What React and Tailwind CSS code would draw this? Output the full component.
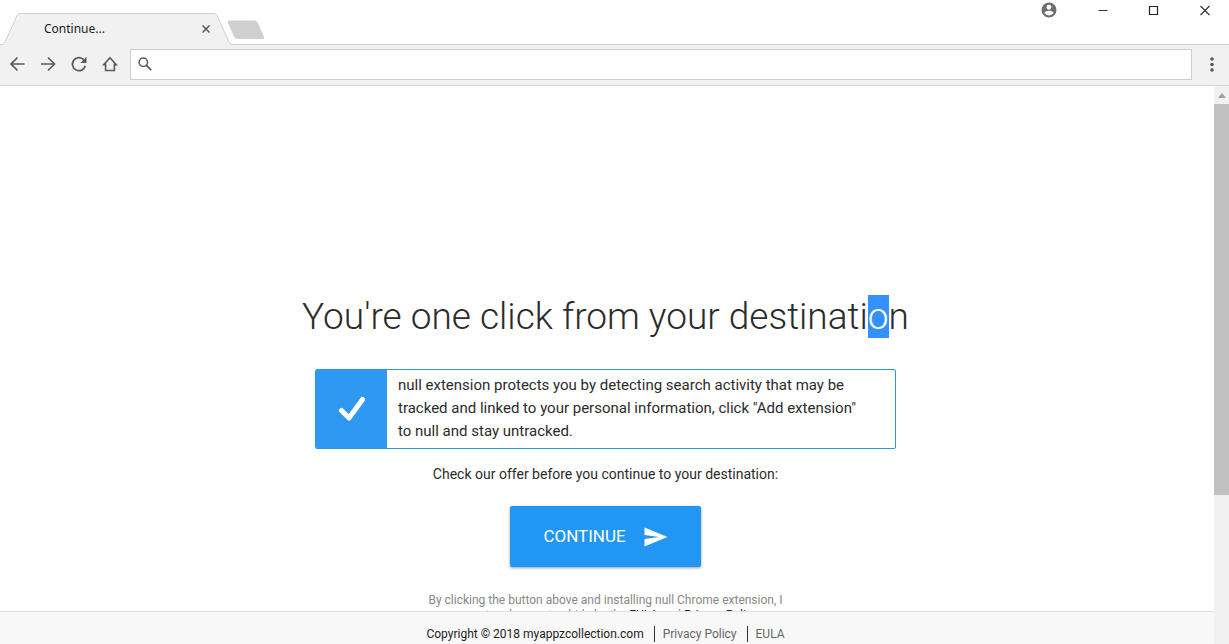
import { clsx } from 'clsx';

const iconButton = 'flex h-6 w-6 shrink-0 items-center justify-center text-[#5a5a5a]';

function TabStrip() {
  return (
    <div className="flex h-[45px] items-end justify-between border-b border-[#d0d0d0] bg-white">
      <div className="flex items-end">
        <div className="relative -mb-px h-8 w-[234px]">
          <svg className="absolute inset-0" width="234" height="32" viewBox="0 0 234 32" fill="none">
            <path d="M0 32 L4 31 L17 2.5 Q18 .5 20 .5 H214 Q216 .5 217 2.5 L230 31 L234 32 Z" fill="#f1f1f1" />
            <path d="M0 31.5 H2 Q4 31 5 29 L17 2.5 Q18 .5 20 .5 H214 Q216 .5 217 2.5 L229 29 Q230 31 232 31.5 H234" stroke="#d0d0d0" />
          </svg>
          <div className="relative flex h-8 items-center justify-between pl-11 pr-5">
            <span className="font-['Noto_Sans',sans-serif] text-xs leading-5 text-[#222]">Continue...</span>
            <button type="button" aria-label="Close tab" className="flex h-4 w-4 items-center justify-center">
              <svg width="8" height="8" viewBox="0 0 8 8" stroke="#5a5a5a" strokeWidth="1.5">
                <path d="M.5 .5 L7.5 7.5 M7.5 .5 L.5 7.5" />
              </svg>
            </button>
          </div>
        </div>
        <button type="button" aria-label="New tab" className="mb-1 -ml-2">
          <svg width="39" height="20" viewBox="0 0 39 20">
            <path d="M4 .5 H28 Q31 .5 32 3 L38 17 Q39 19 37 19 H12 Q9 19 8 16.5 L2 3 Q1 .5 4 .5 Z" fill="#cfcfcf" />
          </svg>
        </button>
      </div>

      {/* Window controls */}
      <div className="flex h-5 items-center gap-[35px] self-start pr-4">
        <button type="button" aria-label="Account" className="pr-0.5">
          <svg width="18" height="18" viewBox="0 0 24 24" fill="#6e6e6e">
            <path d="M12 2a10 10 0 1 0 0 20 10 10 0 0 0 0-20zm0 3a3.3 3.3 0 1 1 0 6.6A3.3 3.3 0 0 1 12 5zm0 14.2a7.2 7.2 0 0 1-6-3.22c.03-1.990 4-3.080 6-3.080s5.970 1.090 6 3.080a7.200 7.200 0 0 1-6 3.220z" />
          </svg>
        </button>
        <button type="button" aria-label="Minimize">
          <svg width="16" height="16" viewBox="0 0 16 16"><path d="M3.500 8.500 H12.500" stroke="#333" /></svg>
        </button>
        <button type="button" aria-label="Maximize">
          <svg width="16" height="16" viewBox="0 0 16 16"><path d="M3.500 4.500 h8 v8 h-8 z" fill="none" stroke="#222" strokeWidth="1.200" /></svg>
        </button>
        <button type="button" aria-label="Close">
          <svg width="16" height="16" viewBox="0 0 16 16"><path d="M3.500 4 L12.500 13 M12.500 4 L3.500 13" stroke="#333" strokeWidth="1.200" /></svg>
        </button>
      </div>
    </div>
  );
}

function Toolbar() {
  return (
    <div className="flex h-[41px] items-center border-b border-[#d6d6d6] bg-[#f1f1f1] px-[5px] pb-0.5">
      <nav className="flex gap-[7px]">
        <button type="button" aria-label="Back" className={iconButton}>
          <svg width="16" height="16" viewBox="0 0 16 16" fill="none" stroke="currentColor" strokeWidth="1.700">
            <path d="M15.500 8 H2 M8.500 1.500 L2 8 L8.500 14.500" />
          </svg>
        </button>
        <button type="button" aria-label="Forward" className={iconButton}>
          <svg width="16" height="16" viewBox="0 0 16 16" fill="none" stroke="currentColor" strokeWidth="1.700">
            <path d="M1 8 H14.500 M8 1.500 L14.500 8 L8 14.500" />
          </svg>
        </button>
        <button type="button" aria-label="Reload" className={iconButton}>
          <svg width="16" height="16" viewBox="0 0 16 16" fill="none" stroke="currentColor" strokeWidth="1.800">
            <path d="M13 4 A6.500 6.500 0 1 0 14.300 9.800" />
            <path d="M15.500 .8 V7 H9.300 Z" fill="currentColor" stroke="none" />
          </svg>
        </button>
        <button type="button" aria-label="Home" className={iconButton}>
          <svg width="16" height="16" viewBox="0 0 16 16" fill="none" stroke="currentColor" strokeWidth="1.600">
            <path d="M8 1.800 L14.200 8.600 H12.400 V14.500 H3.600 V8.600 H1.800 Z" />
          </svg>
        </button>
      </nav>
      <label className="ml-2 flex h-[31px] flex-1 items-center border border-[#cdcdcd] bg-white pl-[7px]">
        <svg width="14" height="14" viewBox="0 0 14 14" fill="none" stroke="#5a5a5a" strokeWidth="1.500">
          <circle cx="5.300" cy="5.300" r="4.200" />
          <path d="M8.400 8.400 L13.200 13.200" strokeWidth="1.800" />
        </svg>
        <input type="text" aria-label="Address" className="ml-2 h-full flex-1 text-sm outline-none" />
      </label>
      <button type="button" aria-label="Menu" className={clsx(iconButton, 'ml-2')}>
        <svg width="4" height="15" viewBox="0 0 4 15" fill="currentColor">
          <circle cx="2" cy="2" r="1.800" />
          <circle cx="2" cy="7.500" r="1.800" />
          <circle cx="2" cy="13" r="1.800" />
        </svg>
      </button>
    </div>
  );
}

function Offer() {
  return (
    <section className="flex flex-1 flex-col items-center overflow-hidden pr-[3px] pt-52 text-[#2b2b2b]">
      <h1 className="shrink-0 text-[37px] font-light leading-[45px]">
        You're one click from your destinati<span className="bg-[#3390ff] text-white">o</span>n
      </h1>

      <div className="mt-[30px] flex w-[581px] max-w-full shrink-0 overflow-hidden rounded-xs border border-[#2b98e0]">
        <div className="flex w-[71px] shrink-0 items-center justify-center bg-[#2f98f3]">
          <svg width="28" height="26" viewBox="0 0 28 26" fill="none" stroke="#fff" strokeWidth="5" strokeLinecap="round" strokeLinejoin="round">
            <path d="M3.500 14.500 L11 22 L24.500 3.500" />
          </svg>
        </div>
        <p className="pb-[5px] pl-[11px] pr-8 pt-1 text-[15px] leading-[23px]">
          null extension protects you by detecting search activity that may be tracked and linked to your
          personal information, click "Add extension" to null and stay untracked.
        </p>
      </div>

      <p className="mt-3.5 shrink-0 text-sm leading-[23px]">Check our offer before you continue to your destination:</p>

      <button
        type="button"
        className="mt-5 flex h-[61px] shrink-0 items-center gap-[18px] rounded-xs bg-[#2196f3] px-[33px] text-[17px] text-white shadow-[0_1px_3px_rgba(0,0,0,0.4)]"
      >
        CONTINUE
        <svg width="24" height="20" viewBox="0 0 24 20" fill="#fff">
          <path d="M.5 .5 L23.500 10 L.5 19.500 V12 L15 10 L.5 8 Z" />
        </svg>
      </button>

      <p className="mt-[26px] w-[360px] shrink-0 text-center text-xs leading-[15px] text-[#888]">
        By clicking the button above and installing null Chrome extension, I accept and agree to abide by the{' '}
        <a href="#eula" className="text-[#222]">EULA</a> and <a href="#privacy" className="text-[#222]">Privacy Policy</a>
      </p>
    </section>
  );
}

function Footer() {
  return (
    <footer className="flex h-[33px] shrink-0 items-center justify-center border-t border-[#e2e2e2] bg-[#f8f8f8] pr-[3px] pt-3 text-xs leading-4 text-[#222]">
      <span>Copyright © 2018 myappzcollection.com</span>
      <a href="#privacy" className="ml-2.5 border-l border-[#333] pl-2 text-[#666]">Privacy Policy</a>
      <a href="#eula" className="ml-2.5 border-l border-[#333] pl-2 text-[#666]">EULA</a>
    </footer>
  );
}

function Scrollbar() {
  return (
    <div className="flex w-[15px] shrink-0 flex-col bg-[#f1f1f1]">
      <div className="flex h-[18px] shrink-0 items-center justify-center">
        <svg width="8" height="5" viewBox="0 0 8 5"><path d="M0 5 L4 0 L8 5 Z" fill="#a0a0a0" /></svg>
      </div>
      <div className="h-[70%] bg-[#c1c1c1]" />
    </div>
  );
}

export default function App() {
  return (
    <div className="flex h-screen flex-col overflow-hidden bg-white font-[Roboto,sans-serif]">
      <TabStrip />
      <Toolbar />
      <div className="flex min-h-0 flex-1">
        <main className="flex min-w-0 flex-1 flex-col">
          <Offer />
          <Footer />
        </main>
        <Scrollbar />
      </div>
    </div>
  );
}
